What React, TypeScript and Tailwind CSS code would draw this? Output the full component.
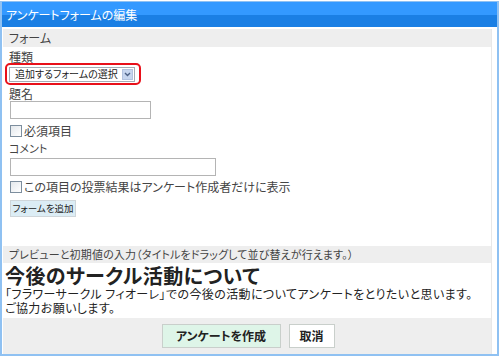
import React from 'react';

const jp = "font-['Noto_Sans_CJK_JP','Noto_Sans',sans-serif] [font-feature-settings:'palt']";

function Checkbox() {
  return (
    <span className="inline-block w-[12px] h-[12px] border border-[#7d8e9e] bg-[linear-gradient(135deg,#e4e8ec,#ffffff)] shrink-0" />
  );
}

export default function App() {
  return (
    <div className={`w-[503px] h-[360px] bg-white ${jp}`}>
      <div className="w-[499px] mt-[1px] border-x-2 border-b-2 border-t border-[#8fc1f2] bg-white">
        {/* title bar */}
        <div className="h-[25px] bg-[linear-gradient(#3399ff_0%,#3399ff_50%,#1a7fe4_52%,#1a7fe4_100%)] flex items-center pl-[4px] text-white text-[12px] leading-none">
          アンケートフォームの編集
        </div>

        <div className="pl-[1px] pr-[5px] pt-[2px]">
          <div className="border-r border-[#e8e8e8]">
            <div className="h-[18px] bg-[#eeeeee] flex items-center pl-[6px] text-[12px] text-[#444] leading-none">
              フォーム
            </div>

            <div className="pl-[6px] pt-[4px] text-[12px] text-[#444] leading-[13px]">
              <div className="leading-[12px]">種類</div>
              <div className="-ml-[4px] w-[136px] h-[22px] border-2 border-[#e8101a] rounded-[5px] flex items-center pl-[2px]">
                <div className="w-[126px] h-[15px] border border-[#a5acb5] bg-white flex items-center justify-between pl-[5px] pr-[1px]">
                  <span className="text-[10px] text-[#222] leading-none whitespace-nowrap">追加するフォームの選択</span>
                  <span className="w-[11px] h-[11px] bg-[#c7d6ef] border border-[#b3c3e0] flex items-center justify-center shrink-0">
                    <svg width="7" height="5" viewBox="0 0 7 5">
                      <path d="M1 1 L3.5 3.5 L6 1" fill="none" stroke="#4d6185" strokeWidth="1.4" />
                    </svg>
                  </span>
                </div>
              </div>

              <div className="mt-[2px]">題名</div>
              <div className="mt-[1px] ml-[1px] w-[141px] h-[18px] border border-[#b4b4b4] bg-white" />

              <label className="mt-[5px] ml-[1px] flex items-center gap-[2px]">
                <Checkbox />
                <span>必須項目</span>
              </label>

              <div className="mt-[5px] text-[11px]">コメント</div>
              <div className="mt-[3px] ml-[1px] w-[206px] h-[18px] border border-[#b4b4b4] bg-white" />

              <label className="mt-[4px] ml-[1px] flex items-center gap-[2px]">
                <Checkbox />
                <span>この項目の投票結果はアンケート作成者だけに表示</span>
              </label>

              <button className="mt-[7px] ml-[1px] w-[66px] h-[17px] bg-[#dcedf5] border border-[#cfd6da] text-[9.5px] text-[#222] leading-none whitespace-nowrap flex items-center justify-center">
                フォームを追加
              </button>
            </div>

            <div className="mt-[29px] h-[17px] bg-[#eeeeee] flex items-center pl-[6px] text-[11px] tracking-[0.15px] text-[#444] leading-none">
              プレビューと初期値の入力（タイトルをドラッグして並び替えが行えます。）
            </div>

            <div className="pl-[2px] pt-[2px] pb-[3px] text-[#222]">
              <div className="text-[20px] tracking-[0.4px] font-bold leading-[21px]">今後のサークル活動について</div>
              <div className="text-[12px] tracking-[0.4px] leading-[14px] mt-[1px]">
                「フラワーサークル フィオーレ」での今後の活動についてアンケートをとりたいと思います。
                <br />
                ご協力お願いします。
              </div>
            </div>

            <div className="h-[36px] bg-[#eeeeee] flex items-center justify-center gap-[8px] pl-[2px]">
              <button className="w-[119px] h-[24px] bg-[#def5e8] border border-[#c9cfcb] text-[12px] font-bold text-[#222] leading-none">
                アンケートを作成
              </button>
              <button className="w-[46px] h-[24px] bg-white border border-[#c9cfcb] text-[12px] font-bold text-[#222] leading-none">
                取消
              </button>
            </div>
          </div>
        </div>
      </div>
    </div>
  );
}
